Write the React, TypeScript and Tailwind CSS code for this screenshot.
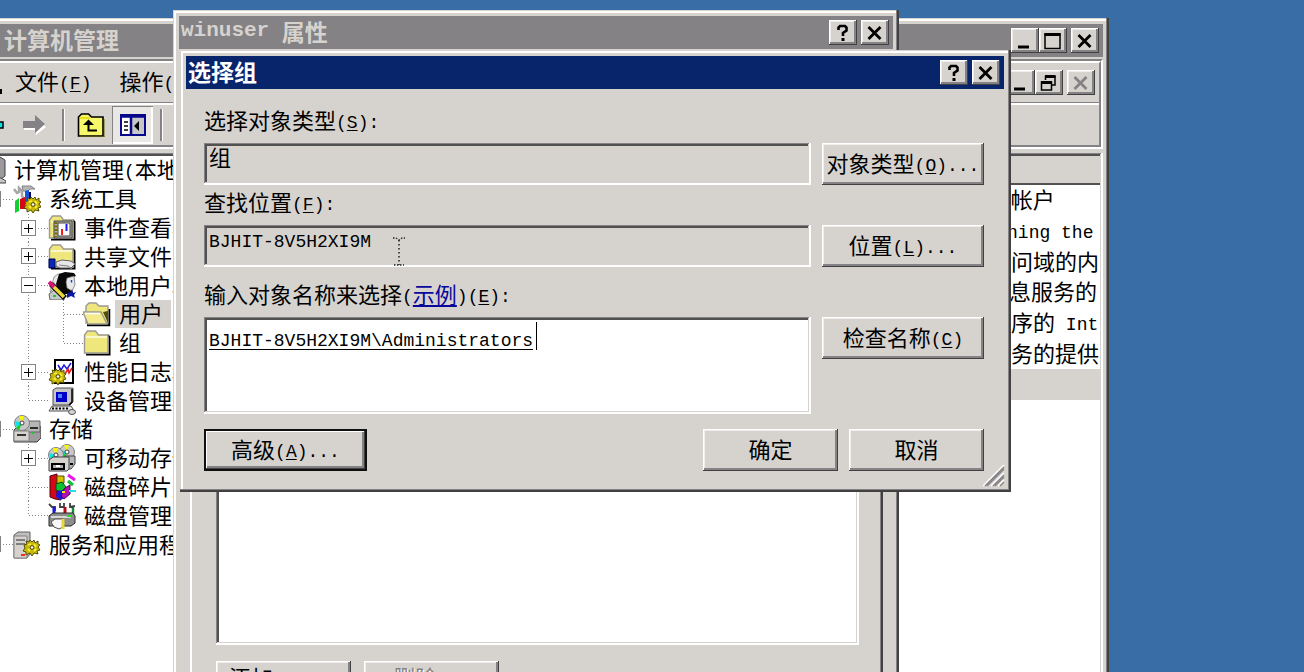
import type { ReactNode } from "react";
import clsx from "clsx";

const CJK = "font-['Noto_Sans_CJK_SC','Liberation_Mono',sans-serif]";
const MONO = "font-['Liberation_Mono','Noto_Sans_CJK_SC',monospace]";

const FRAME =
  "bg-[#d6d3ce] shadow-[inset_-2px_-2px_0_#424142,inset_-3px_-3px_0_#848284,inset_1px_1px_0_#d6d3ce,inset_3px_3px_0_#fff]";
const RAISED =
  "bg-[#d6d3ce] shadow-[inset_-1px_-1px_0_#424142,inset_1px_1px_0_#fff,inset_-3px_-3px_0_#848284,inset_2px_2px_0_#efeeec]";
const DEFAULT_RAISED =
  "bg-[#d6d3ce] shadow-[inset_0_0_0_2px_#101010,inset_-3px_-3px_0_#424142,inset_3px_3px_0_#fff,inset_-5px_-5px_0_#848284]";
const SUNKEN =
  "shadow-[inset_-2px_-2px_0_#fff,inset_1px_1px_0_#848284,inset_-3px_-3px_0_#d6d3ce,inset_3px_3px_0_#525152]";

const LINE = "pb-1 leading-[24px] whitespace-nowrap";

// Latin runs are set smaller in a monospace face; "&" marks the underlined access key.
function Label({ text, latin = "text-[18px]" }: { text: string; latin?: string }) {
  return (
    <>
      {text.split(/([\x20-\x7e]+)/).map((run, i) => {
        if (i % 2 === 0) return run;
        const [before, after] = run.split("&");
        return (
          <span key={i} className={clsx(MONO, latin, "align-[1px] leading-none whitespace-pre")}>
            {before}
            {after && <u className="underline-offset-2">{after[0]}</u>}
            {after?.slice(1)}
          </span>
        );
      })}
    </>
  );
}

function Glyph({ name }: { name: string }) {
  return (
    <svg viewBox="0 0 20 18" className="h-[18px] w-5" fill="none" stroke="currentColor">
      {name === "help" && (
        <>
          <path d="M5.500 6V3.500L7 2h5l1.500 1.500v3L10 9v3" strokeWidth="2.600" />
          <path d="M8.500 14h3v3h-3z" fill="currentColor" stroke="none" />
        </>
      )}
      {name === "close" && <path d="M3.500 3l12 12M15.500 3l-12 12" strokeWidth="2.800" />}
      {name === "min" && <path d="M3 15h11" strokeWidth="3" />}
      {name === "max" && (
        <>
          <path d="M2 2h15v14.500h-15z" strokeWidth="1.500" />
          <path d="M1.500 2.500h16" strokeWidth="3" />
        </>
      )}
      {name === "restore" && (
        <>
          <path d="M6.500 6V2.500h9.500V11h-3" strokeWidth="1.500" />
          <path d="M6 2.500h10.500" strokeWidth="3" />
          <path d="M2.500 8h10v8h-10z" strokeWidth="1.500" />
          <path d="M2 8.500h11" strokeWidth="3" />
        </>
      )}
    </svg>
  );
}

function CaptionButton({ name, label, disabled }: { name: string; label: string; disabled?: boolean }) {
  return (
    <button
      aria-label={label}
      disabled={disabled}
      className={clsx(RAISED, "flex h-[25px] w-7 shrink-0 items-center justify-center", disabled && "text-[#848284]")}
    >
      <Glyph name={name} />
    </button>
  );
}

function TitleBar({ title, active, children }: { title: ReactNode; active?: boolean; children: ReactNode }) {
  return (
    <header
      className={clsx(
        "flex h-[33px] items-center justify-between pl-[2px] pr-1",
        active ? "bg-[#08246b] text-white" : "bg-[#848284] text-[#d6d3ce]",
      )}
    >
      <h2 className={clsx(LINE, "flex items-center text-[23px] font-bold")}>{title}</h2>
      <div className="flex text-black">{children}</div>
    </header>
  );
}

function PushButton({ text, className, isDefault, disabled }: { text: string; className: string; isDefault?: boolean; disabled?: boolean }) {
  return (
    <button
      disabled={disabled}
      className={clsx(
        isDefault ? DEFAULT_RAISED : RAISED,
        LINE,
        disabled && "text-[#848284] [text-shadow:1px_1px_0_#fff]",
        className,
      )}
    >
      <Label text={text} />
    </button>
  );
}

/* ---------- tree ---------- */

type Guide = "blank" | "line" | "tee" | "last";
type Node = { text: string; icon: string; guides: Guide[]; box?: "+" | "-"; selected?: boolean };

const NODES: Node[] = [
  { text: "计算机管理(本地)", icon: "computer", guides: [] },
  { text: "系统工具", icon: "tools", guides: ["tee"], box: "-" },
  { text: "事件查看器", icon: "events", guides: ["blank", "tee"], box: "+" },
  { text: "共享文件夹", icon: "shared", guides: ["blank", "tee"], box: "+" },
  { text: "本地用户和组", icon: "users", guides: ["blank", "tee"], box: "-" },
  { text: "用户", icon: "open", guides: ["blank", "line", "tee"], selected: true },
  { text: "组", icon: "folder", guides: ["blank", "line", "last"] },
  { text: "性能日志和警报", icon: "perf", guides: ["blank", "tee"], box: "+" },
  { text: "设备管理器", icon: "device", guides: ["blank", "last"] },
  { text: "存储", icon: "storage", guides: ["tee"], box: "-" },
  { text: "可移动存储", icon: "removable", guides: ["blank", "tee"], box: "+" },
  { text: "磁盘碎片整理程序", icon: "defrag", guides: ["blank", "tee"] },
  { text: "磁盘管理", icon: "disk", guides: ["blank", "last"] },
  { text: "服务和应用程序", icon: "services", guides: ["last"], box: "+" },
];

function GuideCell({ kind, box }: { kind: Guide; box?: "+" | "-" }) {
  return (
    <svg className="h-full w-[35px] shrink-0" shapeRendering="crispEdges" stroke="#848284" strokeDasharray="1 2">
      {kind !== "blank" && <line x1="15.500" x2="15.500" y1="0" y2={kind === "last" ? "50%" : "100%"} />}
      {(kind === "tee" || kind === "last") && <line x1="16" x2="35" y1="50%" y2="50%" />}
      {box && (
        <svg y="50%" overflow="visible" strokeDasharray="none">
          <rect x="8.500" y="-7.500" width="14" height="15" fill="#fff" />
          <path d={box === "+" ? "M11 0h9M15.500 -4.500v9" : "M11 0h9"} stroke="#000" strokeWidth="1.500" />
        </svg>
      )}
    </svg>
  );
}

function Gear({ x, y }: { x: number; y: number }) {
  return (
    <g transform={`translate(${x} ${y})`}>
      <path
        d="M0 5l3-1-1-3 3 1 1-2 2 2 2-2 1 3 3-2v3l2 1-2 2 2 3-3 1 1 3-4-1-2 3-2-3-4 2v-3l-3-1 2-3z"
        fill="#c8b808"
        stroke="#4a4200"
        strokeWidth=".9"
      />
      <path d="M4 5l3-1M10 4l2 3M4 9l2 2M10 11l2-2" stroke="#f7ef39" strokeWidth="1.800" />
      <circle cx="8" cy="7.500" r="1.800" fill="#fff" stroke="#4a4200" />
    </g>
  );
}

function Folder() {
  return (
    <>
      <path d="M3 25.500h23.500V8l-2-2" fill="none" stroke="#000" strokeWidth="2" />
      <path d="M1.500 24V6l3-4h8l3 4h9.500v18z" fill="#efe77b" stroke="#9c9a94" strokeWidth="1.400" />
      <path d="M3 8h21" stroke="#fff" strokeWidth="1.300" />
    </>
  );
}

function Disc({ x, y }: { x: number; y: number }) {
  return (
    <g transform={`translate(${x} ${y})`}>
      <circle r="7.500" fill="#c6c7c6" stroke="#848284" />
      <path d="M0 0L-7-2l2 7z" fill="#00e7e7" />
      <path d="M0 0L-3-7h5z" fill="#f7f700" />
      <path d="M0 0l-6 5 3 2z" fill="#18d018" />
      <circle r="2" fill="#fff" stroke="#424142" />
    </g>
  );
}

function TreeIcon({ name }: { name: string }) {
  return (
    <svg viewBox="0 0 28 28" className="size-7 shrink-0" fill="none">
      {name === "computer" && (
        <>
          <path d="M6 1h16l5 3v16l-4 3H6z" fill="#9c9a9c" stroke="#424142" />
          <path d="M8 4h11v11H8z" fill="#0000c8" />
          <path d="M3 22h20l5 3v2H3z" fill="#c6c7c6" stroke="#424142" />
        </>
      )}
      {name === "tools" && (
        <>
          <path d="M9 1h9l4 3h-5l-2 2h-5z" fill="#b5b6b5" stroke="#848284" />
          <path d="M1 4l3 4 2-1V3l3 3v5l3 5" stroke="#a5a6a5" strokeWidth="2.500" />
          <path d="M2 16l4-3v13l-4 2z" fill="#10d030" />
          <path d="M7 14l5-2v12H7z" fill="#d60818" />
          <path d="M12 6l4-1v10l-4 2z" fill="#1058d8" />
          <path d="M16 7h2v10h-2z" fill="#000050" />
          <Gear x={12} y={12} />
        </>
      )}
      {name === "events" && (
        <>
          <Folder />
          <path d="M6 7h18v17H6z" fill="#b5b2ad" stroke="#424142" />
          <path d="M10 9h12v13H10z" fill="#fff" stroke="#424142" />
          <path d="M8 8v15" stroke="#746c00" strokeWidth="3" strokeDasharray="2 1.500" />
          <path d="M14 15v6" stroke="#ff1818" strokeWidth="2" />
          <path d="M18.500 10v7" stroke="#1818ff" strokeWidth="2" />
        </>
      )}
      {name === "shared" && (
        <>
          <Folder />
          <path d="M1 16h6v9H1z" fill="#0828b5" stroke="#000050" />
          <path d="M8 19l6-2 9 1 4 3-4 4H12l-4-2z" fill="#e7e7e7" stroke="#636163" />
          <path d="M11 22l9 1 4 3" stroke="#848284" />
        </>
      )}
      {name === "users" && (
        <>
          <path d="M2 20l4-15 4-3h7L8 14z" fill="#e7e7e7" stroke="#9c9a9c" />
          <path d="M11 2l6-2 9 1 2 3-5 2-2 8 5 8H12L8 12z" fill="#080808" />
          <path d="M19 6l7-2 1 9-3 6-5-3-1-6z" fill="#e7e7e7" stroke="#636163" strokeWidth=".7" />
          <path d="M23.500 8v2.500" stroke="#1040e0" strokeWidth="1.500" />
          <path d="M1 22l5-4 10 8v2H2z" fill="#c6c7c6" stroke="#636163" />
          <path d="M19 21l4-1 1-3 1 4 3-1-2 3 1 3-4-2-4 2z" fill="#0818a5" />
          <path d="M3 12l14 14" stroke="#000" strokeWidth="5.500" />
          <path d="M4 13l12 12" stroke="#e7d739" strokeWidth="3.500" />
          <path d="M1 10l5 5" stroke="#d61873" strokeWidth="4" />
          <path d="M5 24h3" stroke="#10d030" strokeWidth="2" />
        </>
      )}
      {name === "open" && (
        <>
          <path d="M4 25h22V9" stroke="#000" strokeWidth="2.500" />
          <path d="M3 23V6l3-3h7l3 3h9v17z" fill="#efe77b" stroke="#9c9a94" strokeWidth="1.400" />
          <path d="M20 12l5 11V11z" fill="#525000" />
          <path d="M0 12h18l6 12H5z" fill="#f3eb8c" stroke="#9c9a94" strokeWidth="1.400" />
          <path d="M2 13.500h15" stroke="#fff" strokeWidth="1.500" />
        </>
      )}
      {name === "folder" && <Folder />}
      {name === "perf" && (
        <>
          <path d="M7 2h18v23H7z" fill="#fff" stroke="#000" strokeWidth="2" />
          <path d="M10 7l3 5 3-5 3 4 4-6" stroke="#1818e0" strokeWidth="1.500" />
          <path d="M17 16l3-5 1 4 3-5" stroke="#f01818" strokeWidth="1.500" />
          <Gear x={2} y={11} />
        </>
      )}
      {name === "device" && (
        <>
          <path d="M5 3l3-2h17v14l-3 3H5z" fill="#c6c7c6" stroke="#525152" />
          <path d="M24 2v13l-3 3" stroke="#000" strokeWidth="1.500" />
          <path d="M8 5h11v10H8z" fill="#0000c8" />
          <path d="M10 7h4v4h-4z" fill="#4a82ff" />
          <path d="M4 19h19l2 3-1 2H1z" fill="#e7e7e7" stroke="#525152" />
          <path d="M4 21.500h17" stroke="#000" strokeWidth="2" strokeDasharray="2 1.500" />
          <ellipse cx="24" cy="25" rx="3.500" ry="2.500" fill="#d6d3ce" stroke="#525152" />
        </>
      )}
      {name === "storage" && (
        <>
          <path d="M1 15l4-4h22l1 2v10l-4 4H1z" fill="#9c9a9c" stroke="#424142" />
          <path d="M12 9l4-3h11v11H12z" fill="#b5b6b5" stroke="#636163" />
          <path d="M1 16h15v10H1z" fill="#d6d3ce" stroke="#848284" />
          <path d="M4 20h9M17 13h8" stroke="#000" strokeWidth="1.500" />
          <path d="M19 17h2v2h-2z" fill="#10d030" />
          <Disc x={9} y={8} />
        </>
      )}
      {name === "removable" && (
        <>
          <Disc x={19} y={8} />
          <path d="M17 12h10v8l-4 5h-6z" fill="#b5b6b5" stroke="#424142" />
          <path d="M22 20h3" stroke="#000" strokeWidth="2" />
          <Disc x={8} y={11} />
          <path d="M1 16l4-3h16v12l-2 2H1z" fill="#d6d3ce" stroke="#424142" />
          <path d="M4 20h12v5H4z" fill="#adaaad" stroke="#000" strokeWidth="2" />
          <path d="M8 22h4" stroke="#fff" strokeWidth="2" />
        </>
      )}
      {name === "defrag" && (
        <>
          <path d="M2 3l7-2v22l4 4-6-1-5-2z" fill="#d60818" stroke="#520008" />
          <path d="M9 3h7v7l-4 3-3-3z" fill="#d6c300" stroke="#525000" />
          <path d="M8 11l6-2 4 5-5 5-5-2z" fill="#10c030" stroke="#005010" />
          <path d="M9 18l7-1v8l-3 2-5-3z" fill="#1818e0" />
          <path d="M17 15l5-3v9l-6 5-3-3z" fill="#b510b5" stroke="#520052" />
          <path d="M20 2l7 5" stroke="#e718e7" strokeWidth="3" />
          <path d="M20 8l5 4" stroke="#10c030" strokeWidth="3" />
          <path d="M21 18h7" stroke="#18e7e7" strokeWidth="2" />
          <path d="M14 19h3" stroke="#f7e718" strokeWidth="2" />
        </>
      )}
      {name === "disk" && (
        <>
          <path d="M1 2l3 3h3v4M12 1v4h4V1M22 1v4l5-1M25 5v7" stroke="#424142" strokeWidth="1.800" />
          <path d="M6 5v7" stroke="#1818e0" strokeWidth="3" />
          <path d="M17 5v7" stroke="#b50818" strokeWidth="3" />
          <path d="M25 6v7" stroke="#109030" strokeWidth="2.500" />
          <path d="M1 14l4-3h20l2 3v7l-4 3H1z" fill="#8c8e8c" stroke="#292829" />
          <path d="M3 15h20" stroke="#efefef" strokeWidth="1.500" />
          <path d="M19 14h4" stroke="#18e718" strokeWidth="2" />
          <path d="M3 20l4-3h8v8l-4 2-5-2z" fill="#f7f7f7" stroke="#525152" />
          <path d="M15 17v10" stroke="#e7d739" strokeWidth="3" />
        </>
      )}
      {name === "services" && (
        <>
          <path d="M1 4l4-3h12v22l-3 4H1z" fill="#bdbebd" stroke="#636163" />
          <path d="M1 5h13v22H1z" fill="#d6d3ce" stroke="#848284" />
          <path d="M3 9h9M3 13h9" stroke="#636163" strokeWidth="1.500" />
          <path d="M8 24h4" stroke="#f01818" strokeWidth="1.800" />
          <Gear x={11} y={9} />
        </>
      )}
    </svg>
  );
}

function Tree() {
  return (
    <ul className="grid h-[403px] auto-rows-fr">
      {NODES.map((node) => (
        <li key={node.text} className="flex min-h-0 items-center whitespace-nowrap">
          {node.guides.map((kind, i) => (
            <GuideCell key={i} kind={kind} box={i === node.guides.length - 1 ? node.box : undefined} />
          ))}
          <TreeIcon name={node.icon} />
          <span className={clsx(LINE, "ml-1 pl-1 pr-2", node.selected && "bg-[#d6d3ce]")}>
            <Label text={node.text} />
          </span>
        </li>
      ))}
    </ul>
  );
}

/* ---------- windows ---------- */

const DESCRIPTIONS = [
  "管理计算机(域)的内置帐户",
  "Account used for running the",
  "供来宾访问计算机或访问域的内",
  "用于启动 Internet 信息服务的",
  "用于启动进程外应用程序的 Int",
  "这是一个帮助和支持服务的提供",
];

function Separator() {
  return <div className="h-8 w-[3px] border-l-2 border-r border-l-[#848284] border-r-white" />;
}

function ManagementWindow() {
  return (
    <section className={clsx(FRAME, "absolute -bottom-4 -left-8 top-[18px] flex w-[1141px] flex-col p-[6px]")}>
      <TitleBar
        title={
          <>
            <svg viewBox="0 0 24 24" className="mr-1 size-6" fill="none">
              <path d="M3 3h14v12H3z" fill="#0000c8" stroke="#d6d3ce" />
              <path d="M2 18h21v4H2z" fill="#000" />
            </svg>
            计算机管理
          </>
        }
      >
        <CaptionButton name="min" label="最小化" />
        <CaptionButton name="max" label="最大化" />
        <div className="w-1" />
        <CaptionButton name="close" label="关闭" />
      </TitleBar>

      <div className="mt-[2px] border-y-2 border-r-2 border-b-white border-r-white border-t-[#848284]">
        <div className="border-y-2 border-r-2 border-b-[#848284] border-r-[#848284] border-t-white">
          <nav className="flex h-10 items-center justify-between border-b border-[#848284] pr-1">
            <div className="flex items-center">
              <svg viewBox="0 0 24 24" className="ml-1 mr-[13px] size-6" fill="none">
                <path d="M3 3h14v12H3z" fill="#0000c8" stroke="#848284" />
                <path d="M2 18h22v5H2z" fill="#000" />
              </svg>
              <button className={clsx(LINE, "mr-7")}>
                <Label text="文件(&F)" />
              </button>
              <button className={LINE}>
                <Label text="操作(&A)" />
              </button>
            </div>
            <div className="flex">
              <CaptionButton name="min" label="最小化" />
              <CaptionButton name="restore" label="还原" />
              <div className="w-1" />
              <CaptionButton name="close" label="关闭" disabled />
            </div>
          </nav>
          <div className="flex h-[42px] items-center border-t-2 border-white pl-[6px]">
            <button aria-label="后退" className="mr-[18px]">
              <svg viewBox="0 0 24 20" className="h-5 w-6">
                <path d="M1 10l9-8v5h13v6H10v5z" fill="#00e3e7" stroke="#000" strokeWidth="1.500" />
              </svg>
            </button>
            <button aria-label="前进" className="mr-[14px]" disabled>
              <svg viewBox="0 0 26 22" className="h-[22px] w-[26px]">
                <path d="M2 9h12V4l10 9-10 8v-5H2z" fill="#fff" />
                <path d="M1 7h12V1l10 9-10 9v-5H1z" fill="#848284" />
              </svg>
            </button>
            <Separator />
            <button aria-label="向上" className="ml-3 mr-[7px]">
              <svg viewBox="0 0 28 24" className="h-6 w-7">
                <path d="M1.500 23V4l3-3h7l3 3h11.500v19z" fill="#f7f76b" stroke="#000" strokeWidth="1.600" />
                <path d="M3 5h10" stroke="#e7d700" strokeWidth="1.500" />
                <path d="M11.500 9v8.500H20" fill="none" stroke="#000" strokeWidth="2" />
                <path d="M6 12l5.500-5.500L17 12z" />
                <path d="M3 24h25V6" fill="none" stroke="#6b6900" />
              </svg>
            </button>
            <button
              aria-label="显示/隐藏控制台树"
              className="mr-[7px] flex h-[38px] w-[41px] items-center justify-center bg-[#e9e8e5] shadow-[inset_1px_1px_0_#848284,inset_-2px_-2px_0_#fff]"
            >
              <svg viewBox="0 0 26 22" className="h-[22px] w-[26px]">
                <path d="M1 1h24v20H1z" fill="#fff" stroke="#08088c" strokeWidth="2" />
                <path d="M12 3h12v17H12z" fill="#c6c7c6" />
                <path d="M1 2.500h24M11 3v18" stroke="#08088c" strokeWidth="2.500" />
                <path d="M4 8h4M4 12h4M4 16h4" stroke="#000" strokeWidth="1.500" />
                <path d="M19 7v10l-5-5z" />
              </svg>
            </button>
            <Separator />
          </div>
        </div>
      </div>

      <main className="mt-1 flex min-h-0 grow">
        <div className={clsx(SUNKEN, "w-[300px] bg-white pl-1 pt-[3px]")}>
          <Tree />
        </div>
        <div className={clsx(SUNKEN, "ml-1 min-w-0 grow bg-white pr-[3px] pt-[3px]")}>
          <table className="w-full table-fixed">
            <thead>
              <tr>
                <th className="h-7 border-b-2 border-[#525152] bg-[#d6d3ce]" aria-label="描述" />
              </tr>
            </thead>
          </table>
          <table className="h-[184px] w-full table-fixed" aria-label="描述">
            <tbody>
              {DESCRIPTIONS.map((text) => (
                <tr key={text}>
                  <td className={clsx(LINE, "overflow-hidden pl-[519px]")}>
                    <Label text={text} />
                  </td>
                </tr>
              ))}
            </tbody>
          </table>
          <div className="h-[31px] bg-[#d6d3ce]" />
        </div>
      </main>
    </section>
  );
}

function PropertiesWindow() {
  return (
    <section className={clsx(FRAME, "absolute left-[173px] top-[10px] w-[726px] p-[6px]")}>
      <TitleBar title={<Label text="winuser 属性" latin="text-[21px]" />}>
        <CaptionButton name="help" label="帮助" />
        <div className="w-1" />
        <CaptionButton name="close" label="关闭" />
      </TitleBar>
      <div className={clsx(FRAME, "mx-[10px] mt-[51px] pb-20 pl-[27px] pr-6 pt-[145px]")}>
        <div className={clsx(SUNKEN, "h-[400px] bg-white")} />
        <div className="mt-4 flex gap-[13px]">
          <PushButton text="添加(&D)..." className="h-[34px] w-[135px]" />
          <PushButton text="删除(&R)" className="h-[34px] w-[135px]" disabled />
        </div>
      </div>
    </section>
  );
}

function SelectGroupDialog() {
  const group = "grid grid-cols-[1fr_162px] items-start gap-x-[11px] gap-y-2";
  const label = clsx(LINE, "col-span-2 h-7");

  return (
    <section className={clsx(FRAME, "absolute left-[180px] top-[50px] w-[831px] p-[6px] pb-[21px] pr-[7px]")}>
      <TitleBar title="选择组" active>
        <CaptionButton name="help" label="帮助" />
        <div className="w-1" />
        <CaptionButton name="close" label="关闭" />
      </TitleBar>

      <form className="pl-[18px] pr-5 pt-[18px]">
        <div className={group}>
          <label htmlFor="type" className={label}>
            <Label text="选择对象类型(&S):" />
          </label>
          <input
            id="type"
            readOnly
            defaultValue="组"
            className={clsx(SUNKEN, "h-[42px] min-w-0 bg-transparent pb-4 pl-[5px] leading-[24px] outline-none")}
          />
          <PushButton text="对象类型(&O)..." className="h-[42px]" />
        </div>

        <div className={clsx(group, "mt-1")}>
          <label htmlFor="location" className={label}>
            <Label text="查找位置(&F):" />
          </label>
          <div className="relative grid">
            <input
              id="location"
              readOnly
              defaultValue="BJHIT-8V5H2XI9M"
              className={clsx(SUNKEN, MONO, "h-[42px] min-w-0 bg-transparent pb-2 pl-[5px] text-[18px] outline-none")}
            />
            {/* text cursor */}
            <svg viewBox="0 0 14 30" className="absolute left-[188px] top-3 h-[30px] w-[14px]" stroke="#212021" fill="none">
              <path d="M1 1h3l3 2 3-2h3M2 28h10" strokeDasharray="1.500 1.500" strokeWidth="1.300" />
              <path d="M7 3v25" strokeDasharray="1.500 2.500" strokeWidth="1.500" />
            </svg>
          </div>
          <PushButton text="位置(&L)..." className="h-[42px]" />
        </div>

        <div className={clsx(group, "mt-[14px]")}>
          <label htmlFor="names" className={label}>
            <Label text="输入对象名称来选择(" />
            <a href="#examples" className="text-[#08089c] underline underline-offset-2">
              示例
            </a>
            <Label text=")(&E):" />
          </label>
          <div className="relative grid">
            <textarea
              id="names"
              readOnly
              defaultValue="BJHIT-8V5H2XI9M\Administrators"
              className={clsx(
                SUNKEN,
                MONO,
                "h-[97px] resize-none bg-white pl-[5px] pt-[10px] text-[18px] leading-[28px] underline underline-offset-3 outline-none",
              )}
            />
            <div className="absolute left-[332px] top-[5px] h-7 w-px bg-black" />
          </div>
          <PushButton text="检查名称(&C)" className="h-[42px]" />
        </div>

        <div className="mt-[15px] flex gap-[11px]">
          <PushButton text="高级(&A)..." className="mr-auto h-[42px] w-[163px]" isDefault />
          <PushButton text="确定" className="h-[42px] w-[135px]" />
          <PushButton text="取消" className="h-[42px] w-[135px]" />
        </div>
      </form>

      <svg viewBox="0 0 22 22" className="absolute bottom-[5px] right-[6px] size-[22px]">
        <path d="M0 21L21 0M8 21L21 8M15 21l6-6" stroke="#fff" strokeWidth="1.500" />
        <path d="M2 21L21 2M4 21L21 4M10 21l11-11M12 21l9-9M17 21l4-4" stroke="#848284" strokeWidth="1.300" />
      </svg>
    </section>
  );
}

export default function App() {
  return (
    <div className={clsx(CJK, "relative h-screen overflow-hidden bg-[#396da5] text-[22px] text-black")}>
      <ManagementWindow />
      <PropertiesWindow />
      <SelectGroupDialog />
    </div>
  );
}
